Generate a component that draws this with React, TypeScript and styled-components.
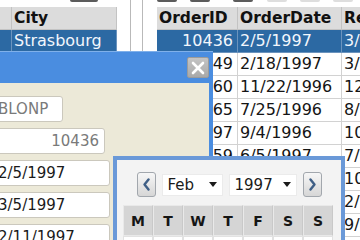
import React from "react";
import styled, { createGlobalStyle } from "styled-components";

const Global = createGlobalStyle`
  html, body { margin: 0; padding: 0; background: #ffffff; }
  body { font-family: "DejaVu Sans", Verdana, sans-serif; }
  * { box-sizing: border-box; }
`;

const Screen = styled.div`
  position: relative;
  width: 360px;
  height: 240px;
  overflow: hidden;
  background: #ffffff;
  display: flex;
  font-family: "DejaVu Sans", Verdana, sans-serif;
  color: #111;
`;

const LeftPane = styled.section`
  flex: 0 0 131px;
  border-right: 1px solid #b9b9b9;
  display: flex;
  flex-direction: column;
  overflow: hidden;
`;

const Splitter = styled.div`
  flex: 0 0 11px;
  background: #ffffff;
`;

const RightPane = styled.section`
  flex: 1 1 auto;
  border-left: 1px solid #b9b9b9;
  padding-left: 14px;
  display: flex;
  flex-direction: column;
  overflow: hidden;
`;

const Toolbar = styled.div`
  height: 7px;
  display: flex;
  align-items: flex-start;
  flex: 0 0 7px;
`;

const ToolButton = styled.div<{ $w: number; $ml: number; $light?: boolean }>`
  width: ${(p) => p.$w}px;
  height: 2px;
  margin-left: ${(p) => p.$ml}px;
  flex: 0 0 auto;
  background: ${(p) => (p.$light ? "#dedede" : "#5c5c5c")};
  border-radius: 0 0 2px 2px;
`;

const Grid = styled.div<{ $cols: string }>`
  display: grid;
  grid-template-columns: ${(p) => p.$cols};
  grid-auto-rows: 23px;
  width: max-content;
`;

const HeadCell = styled.div`
  background: #dcdcdc;
  border-right: 1px solid #c3c3c3;
  border-bottom: 1px solid #c3c3c3;
  font-weight: bold;
  font-size: 15.5px;
  line-height: 22px;
  padding: 0 2px;
  white-space: nowrap;
  overflow: hidden;
  color: #111;
`;

const Cell = styled.div<{ $sel?: boolean; $right?: boolean }>`
  background: ${(p) => (p.$sel ? "#2c69a3" : "#ffffff")};
  color: ${(p) => (p.$sel ? "#f2f6fc" : "#151515")};
  border-right: 1px solid ${(p) => (p.$sel ? "#6b93bd" : "#d2d2d2")};
  border-bottom: 1px solid ${(p) => (p.$sel ? "#6b93bd" : "#d2d2d2")};
  font-size: 16px;
  line-height: 22px;
  padding: ${(p) => (p.$right ? "0 4px 0 2px" : "0 2px")};
  text-align: ${(p) => (p.$right ? "right" : "left")};
  white-space: nowrap;
  overflow: hidden;
`;

/* ---------- Dialog ---------- */
const Dialog = styled.div`
  position: absolute;
  left: -120px;
  top: 51px;
  width: 333px;
  height: 260px;
  background: #4a8de0;
  padding: 0 4px 4px 4px;
  display: flex;
  flex-direction: column;
  border-top: 1px solid #7fb0ea;
`;

const TitleBar = styled.div`
  height: 31px;
  flex: 0 0 31px;
  display: flex;
  justify-content: flex-end;
  align-items: flex-start;
  padding-top: 5px;
`;

const CloseButton = styled.div`
  width: 22px;
  height: 21px;
  border-radius: 2px;
  background: linear-gradient(#c4c4c4, #a9a9a9);
  border: 1px solid #9b9b9b;
  display: flex;
  align-items: center;
  justify-content: center;
`;

const DialogBody = styled.div`
  flex: 1 1 auto;
  background: #ece9d8;
  padding: 13px 0 0 0;
  display: grid;
  grid-template-columns: 100px auto;
  column-gap: 8px;
  row-gap: 6px;
  align-content: start;
`;

const Label = styled.div`
  font-size: 14px;
  line-height: 26px;
  text-align: right;
  color: #222;
  white-space: nowrap;
`;

const Field = styled.div<{ $w: number; $right?: boolean; $muted?: boolean }>`
  width: ${(p) => p.$w}px;
  height: 26px;
  background: #ffffff;
  border: 1px solid #cbc8bd;
  border-radius: 3px;
  font-size: 15px;
  line-height: 24px;
  padding: 0 5px;
  text-align: ${(p) => (p.$right ? "right" : "left")};
  color: ${(p) => (p.$muted ? "#7a7a7a" : "#1a1a1a")};
  white-space: nowrap;
  overflow: hidden;
`;

/* ---------- Calendar ---------- */
const Calendar = styled.div`
  position: absolute;
  left: 113px;
  top: 156px;
  width: 232px;
  height: 120px;
  border: 4px solid #6a99d8;
  background: #f3f3f3;
  padding: 12px 8px 0 6px;
  display: flex;
  flex-direction: column;
`;

const NavRow = styled.div`
  display: flex;
  align-items: center;
  justify-content: center;
  gap: 6px;
  height: 25px;
  padding-left: 2px;
`;

const NavButton = styled.div`
  width: 19px;
  height: 25px;
  border: 1px solid #a2a7ad;
  border-radius: 3px;
  background: linear-gradient(#f7f7f7, #d6d6d6);
  display: flex;
  align-items: center;
  justify-content: center;
`;

const Select = styled.div<{ $w: number }>`
  width: ${(p) => p.$w}px;
  height: 22px;
  background: #ffffff;
  border: 1px solid #ebebeb;
  font-size: 15px;
  line-height: 20px;
  padding: 0 5px 0 5px;
  display: flex;
  align-items: center;
  justify-content: space-between;
  color: #1a1a1a;
`;

const Caret = styled.span`
  width: 0;
  height: 0;
  border-left: 4px solid transparent;
  border-right: 4px solid transparent;
  border-top: 5px solid #1a1a1a;
`;

const DayGrid = styled.div`
  margin-top: 8px;
  display: grid;
  grid-template-columns: repeat(7, 30px);
  grid-auto-rows: 31px;
  width: 210px;
`;

const DayHead = styled.div`
  background: #d5d5d5;
  border: 1px solid #e9e9e9;
  border-right-color: #c9c9c9;
  font-weight: bold;
  font-size: 14px;
  display: flex;
  align-items: center;
  justify-content: center;
  color: #151515;
`;

const DayCell = styled.div<{ $other?: boolean }>`
  background: #ffffff;
  border: 1px solid #e2e2e2;
  font-size: 14px;
  display: flex;
  align-items: center;
  justify-content: center;
  color: ${(p) => (p.$other ? "#aaa" : "#222")};
`;

const Chevron = ({ dir }: { dir: "left" | "right" }) => (
  <svg width="9" height="13" viewBox="0 0 9 13">
    <path
      d={dir === "left" ? "M6.5 1.5 L2.5 6.5 L6.5 11.5" : "M2.5 1.5 L6.5 6.5 L2.5 11.5"}
      fill="none"
      stroke="#3f5f86"
      strokeWidth="2.4"
      strokeLinecap="round"
      strokeLinejoin="round"
    />
  </svg>
);

const orders = [
  ["10436", "2/5/1997", "3/5/1997"],
  ["10449", "2/18/1997", "3/18/1997"],
  ["10360", "11/22/1996", "12/20/1996"],
  ["10265", "7/25/1996", "8/22/1996"],
  ["10297", "9/4/1996", "10/16/1996"],
  ["10559", "6/5/1997", "7/3/1997"],
  ["10679", "9/23/1997", "10/21/1997"],
  ["10826", "1/12/1998", "2/9/1998"],
  ["10628", "8/12/1997", "9/9/1997"],
  ["10566", "6/12/1997", "7/10/1997"],
];

const days = ["M", "T", "W", "T", "F", "S", "S"];
const firstWeek: [string, boolean][] = [
  ["27", true], ["28", true], ["29", true], ["30", true], ["31", true], ["1", false], ["2", false],
];

export default function App() {
  return (
    <>
      <Global />
      <Screen>
        <LeftPane>
          <Toolbar>
            <ToolButton $w={28} $ml={70} />
          </Toolbar>
          <Grid $cols="12px 105px">
            <HeadCell />
            <HeadCell>City</HeadCell>
            <Cell $sel />
            <Cell $sel>Strasbourg</Cell>
            <Cell />
            <Cell>Strasbourg</Cell>
          </Grid>
        </LeftPane>
        <Splitter />
        <RightPane>
          <Toolbar>
            <ToolButton $w={20} $ml={0} />
            <ToolButton $w={20} $ml={13} />
            <ToolButton $w={20} $ml={23} />
            <ToolButton $w={20} $ml={14} $light />
            <ToolButton $w={20} $ml={13} $light />
            <ToolButton $w={20} $ml={13} $light />
          </Toolbar>
          <Grid $cols="81px 104px 100px">
            <HeadCell>OrderID</HeadCell>
            <HeadCell>OrderDate</HeadCell>
            <HeadCell>RequiredDate</HeadCell>
            {orders.map(([id, od, rd], i) => (
              <React.Fragment key={id}>
                <Cell $sel={i === 0} $right>{id}</Cell>
                <Cell $sel={i === 0}>{od}</Cell>
                <Cell $sel={i === 0}>{rd}</Cell>
              </React.Fragment>
            ))}
          </Grid>
        </RightPane>

        <Dialog>
          <TitleBar>
            <CloseButton>
              <svg width="14" height="14" viewBox="0 0 14 14">
                <path d="M2 2 L12 12 M12 2 L2 12" stroke="#ffffff" strokeWidth="2.6" strokeLinecap="round" />
              </svg>
            </CloseButton>
          </TitleBar>
          <DialogBody>
            <Label>CustomerID</Label>
            <Field $w={71} $muted>BLONP</Field>
            <Label>OrderID</Label>
            <Field $w={113} $right $muted>10436</Field>
            <Label>OrderDate</Label>
            <Field $w={118}>2/5/1997</Field>
            <Label>RequiredDate</Label>
            <Field $w={118}>3/5/1997</Field>
            <Label>ShippedDate</Label>
            <Field $w={118}>2/11/1997</Field>
          </DialogBody>
        </Dialog>

        <Calendar>
          <NavRow>
            <NavButton><Chevron dir="left" /></NavButton>
            <Select $w={61}>Feb<Caret /></Select>
            <Select $w={68}>1997<Caret /></Select>
            <NavButton><Chevron dir="right" /></NavButton>
          </NavRow>
          <DayGrid>
            {days.map((d, i) => (
              <DayHead key={i}>{d}</DayHead>
            ))}
            {firstWeek.map(([d, other], i) => (
              <DayCell key={i} $other={other}>{d}</DayCell>
            ))}
          </DayGrid>
        </Calendar>
      </Screen>
    </>
  );
}
